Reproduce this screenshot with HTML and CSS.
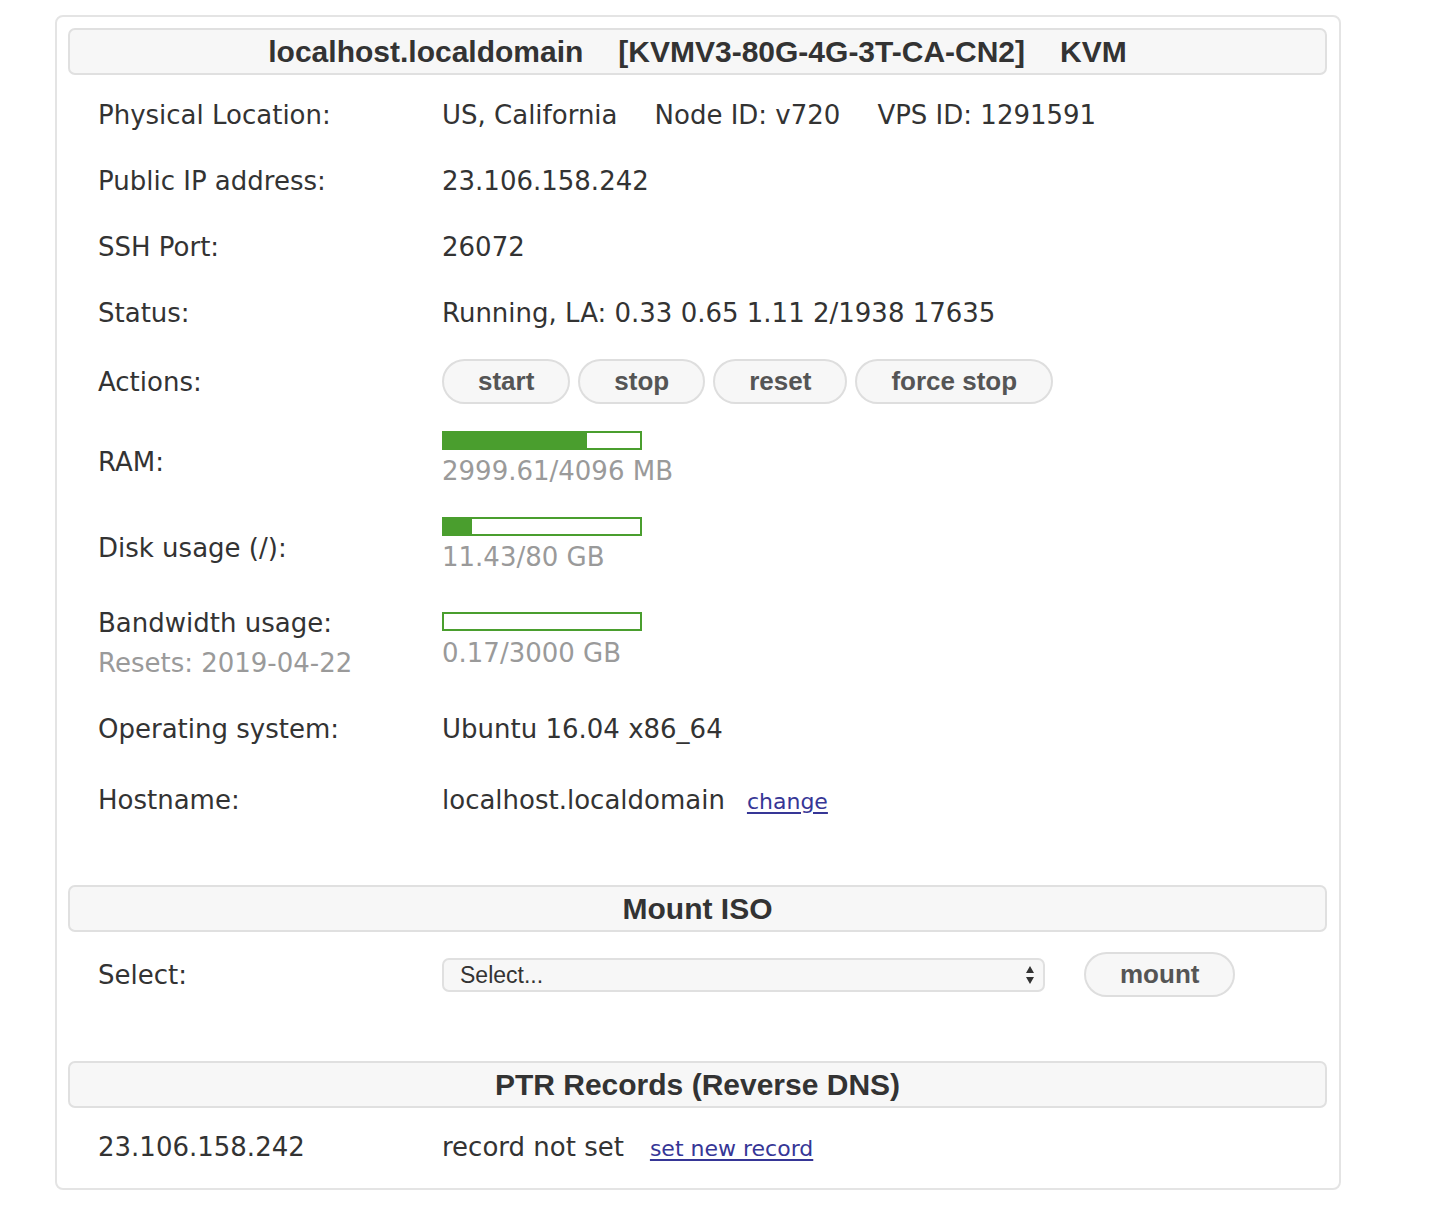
FILE: index.html
```html
<!DOCTYPE html>
<html lang="en">
<head>
<meta charset="utf-8">
<title>VPS Control Panel</title>
<link rel="stylesheet" href="styles.css">
</head>
<body>
<div class="panel">
  <div class="section-head first">
    <span>localhost.localdomain</span><span class="gap">[KVMV3-80G-4G-3T-CA-CN2]</span><span class="gap">KVM</span>
  </div>

  <div class="rows rows-main">
    <div class="row">
      <div class="label">Physical Location:</div>
      <div class="value"><span class="part">US, California</span><span class="part">Node ID: v720</span><span>VPS ID: 1291591</span></div>
    </div>
    <div class="row">
      <div class="label">Public IP address:</div>
      <div class="value">23.106.158.242</div>
    </div>
    <div class="row">
      <div class="label">SSH Port:</div>
      <div class="value">26072</div>
    </div>
    <div class="row">
      <div class="label">Status:</div>
      <div class="value">Running, LA: 0.33 0.65 1.11 2/1938 17635</div>
    </div>
    <div class="row row-actions">
      <div class="label">Actions:</div>
      <div class="value buttons">
        <button class="btn">start</button>
        <button class="btn">stop</button>
        <button class="btn">reset</button>
        <button class="btn">force stop</button>
      </div>
    </div>
    <div class="row row-usage">
      <div class="label usage-label">RAM:</div>
      <div class="value">
        <div class="bar"><div class="fill" style="width: 73.2%"></div></div>
        <div class="muted">2999.61/4096 MB</div>
      </div>
    </div>
    <div class="row row-usage">
      <div class="label usage-label">Disk usage (/):</div>
      <div class="value">
        <div class="bar"><div class="fill" style="width: 14.3%"></div></div>
        <div class="muted">11.43/80 GB</div>
      </div>
    </div>
    <div class="row row-bw">
      <div class="label bw-label">Bandwidth usage:<br><span class="muted">Resets: 2019-04-22</span></div>
      <div class="value bw-value">
        <div class="bar"><div class="fill" style="width: 0%"></div></div>
        <div class="muted">0.17/3000 GB</div>
      </div>
    </div>
    <div class="row">
      <div class="label">Operating system:</div>
      <div class="value">Ubuntu 16.04 x86_64</div>
    </div>
    <div class="row row-host">
      <div class="label">Hostname:</div>
      <div class="value">localhost.localdomain<a class="link link-host" href="#">change</a></div>
    </div>
  </div>

  <div class="section-head mount-head">Mount ISO</div>
  <div class="rows">
    <div class="row row-mount">
      <div class="label">Select:</div>
      <div class="value mount-value">
        <div class="select-wrap">
          <select class="select"><option>Select...</option></select>
          <svg class="arrows" width="10" height="20" viewBox="0 0 10 20"><path d="M5 1 L9 8 L1 8 Z M1 12 L9 12 L5 19 Z" fill="#333"/></svg>
        </div>
        <button class="btn">mount</button>
      </div>
    </div>
  </div>

  <div class="section-head ptr-head">PTR Records (Reverse DNS)</div>
  <div class="rows">
    <div class="row row-ptr">
      <div class="label">23.106.158.242</div>
      <div class="value">record not set<a class="link" href="#">set new record</a></div>
    </div>
  </div>
</div>
</body>
</html>
```

FILE: styles.css
```css
* { box-sizing: border-box; }

html, body {
  margin: 0;
  padding: 0;
  background: #ffffff;
}

body {
  font-family: "DejaVu Sans", Verdana, sans-serif;
  font-size: 26px;
  line-height: 30px;
  color: #333333;
}

.panel {
  margin: 15px 0 0 55px;
  width: 1286px;
  border: 2px solid #e4e4e4;
  border-radius: 8px;
  padding: 11px 12px 0 11px;
}

.section-head {
  height: 47px;
  border: 2px solid #e0e0e0;
  border-radius: 7px;
  background: #f7f7f7;
  font-family: "Liberation Sans", Arial, sans-serif;
  font-weight: bold;
  font-size: 30px;
  line-height: 43px;
  text-align: center;
  color: #333333;
}

.section-head .gap { margin-left: 35px; }

.mount-head { margin-top: 50px; }
.ptr-head { margin-top: 44px; }

.rows {
  padding-left: 30px;
}

.rows-main { padding-top: 7px; }

.row {
  display: grid;
  grid-template-columns: 344px 1fr;
  align-items: start;
  padding: 18px 0;
}

.value .part { margin-right: 37px; }

.row-actions {
  padding: 13px 0 12px;
  align-items: center;
}

.buttons {
  display: flex;
  gap: 8px;
}

.btn {
  height: 45px;
  padding: 0 34px;
  border: 2px solid #dedede;
  border-radius: 23px;
  background: #f7f7f7;
  font-family: "Liberation Sans", Arial, sans-serif;
  font-weight: bold;
  font-size: 26px;
  line-height: 41px;
  color: #555555;
  cursor: pointer;
}

.row-usage {
  padding: 15px 0 16px;
}

.usage-label { margin-top: 16px; }

.bar {
  width: 200px;
  height: 19px;
  border: 2px solid #4a9e2e;
  background: #ffffff;
  margin-bottom: 6px;
}

.fill {
  height: 100%;
  background: #4a9e2e;
}

.muted { color: #9a9a9a; }

.row-bw {
  padding: 15px 0 13px;
}

.bw-label { line-height: 40px; }

.bw-value { margin-top: 9px; }
.bw-value .bar { margin-bottom: 7px; }

.row-host { padding-top: 23px; }

.link {
  margin-left: 26px;
  font-size: 22px;
  color: #363696;
  text-decoration: underline;
  text-underline-offset: 3px;
}

.link-host { margin-left: 22px; }

.row-mount {
  padding: 20px 0;
  align-items: center;
}

.mount-value {
  display: flex;
  align-items: center;
  gap: 39px;
}

.select-wrap {
  position: relative;
  width: 603px;
  height: 34px;
}

.select {
  appearance: none;
  -webkit-appearance: none;
  width: 100%;
  height: 100%;
  border: 2px solid #e0e0e0;
  border-radius: 7px;
  background: #f7f7f7;
  padding: 0 0 0 16px;
  font-family: "Liberation Sans", Arial, sans-serif;
  font-size: 23px;
  color: #333333;
}

.arrows {
  position: absolute;
  right: 10px;
  top: 7px;
  pointer-events: none;
}

.row-ptr {
  padding: 24px 0 24px;
}
```
